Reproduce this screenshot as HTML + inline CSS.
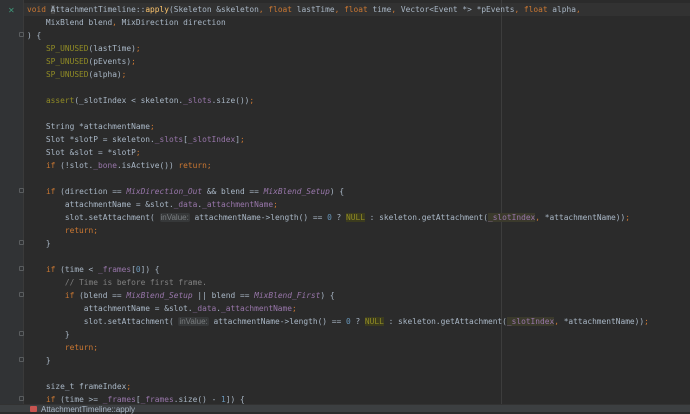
<!DOCTYPE html>
<html><head><meta charset="utf-8"><style>
html,body{margin:0;padding:0}
body{width:690px;height:411px;overflow:hidden;background:#2b2b2b;position:relative;font-family:"DejaVu Sans Mono","Liberation Mono",monospace;font-size:7.86px;color:#a9b7c6}
#gut{position:absolute;left:0;top:0;width:23px;height:404px;background:#313335;border-right:1px solid #3a3a3a}
#guide{position:absolute;left:501px;top:0;width:1px;height:404px;background:#3d3d3d}
#cur{position:absolute;left:24px;top:3px;width:666px;height:13px;background:#323232}
.l{position:absolute;left:27px;white-space:pre;line-height:13px;height:13px}
.k{color:#cc7832}.m{color:#908b25}.f{color:#ffc66d}.p{color:#9876aa}.i{color:#9876aa;font-style:italic}.c{color:#808080}.n{color:#6897bb}
.nl{color:#908b25;background:#3b3b1e}
.hl{background:#3b3a2c}
.h{color:#7a7e80;background:#363839;border-radius:2px;font-family:"Liberation Sans",sans-serif;font-size:8px;padding:0 1px}
.fold{position:absolute;left:19px;width:5px;height:5px;border:1px solid #5a5d5f;border-radius:1px;box-sizing:border-box}
#bar{position:absolute;left:0;top:404px;width:690px;height:7px;background:#3c3f41;border-top:1px solid #323232}
#bar span{position:absolute;left:41px;top:0;font-family:"Liberation Sans",sans-serif;font-size:8px;color:#a9b7c6;line-height:9px}
#bar i{position:absolute;left:30px;top:1px;width:7px;height:6px;background:#c75450;border-radius:1px}
</style></head><body>
<div id="gut"></div>
<div id="cur"></div>
<div id="guide"></div>
<div style="position:absolute;left:8px;top:6px;color:#3f9a7c;font-size:8px;font-family:'DejaVu Sans'">✕</div>
<div class="fold" style="top:32px"></div>
<div class="fold" style="top:188px"></div>
<div class="fold" style="top:240px"></div>
<div class="fold" style="top:266px"></div>
<div class="fold" style="top:292px"></div>
<div class="fold" style="top:331px"></div>
<div class="fold" style="top:357px"></div>
<div class="fold" style="top:396px"></div>

<div class="l" style="top:3px"><span class="k">void </span><span style="background:#4a4a4a">A</span>ttachmentTimeline::<span class="f">apply</span>(Skeleton &amp;skeleton<span class="k">, float </span>lastTime<span class="k">, float </span>time<span class="k">, </span>Vector&lt;Event *&gt; *pEvents<span class="k">, float </span>alpha<span class="k">,</span></div>
<div class="l" style="top:16px">    MixBlend blend<span class="k">, </span>MixDirection direction</div>
<div class="l" style="top:29px">) {</div>
<div class="l" style="top:42px">    <span class="m">SP_UNUSED</span>(lastTime)<span class="k">;</span></div>
<div class="l" style="top:55px">    <span class="m">SP_UNUSED</span>(pEvents)<span class="k">;</span></div>
<div class="l" style="top:68px">    <span class="m">SP_UNUSED</span>(alpha)<span class="k">;</span></div>
<div class="l" style="top:94px">    <span class="m">assert</span>(_slotIndex &lt; skeleton.<span class="p">_slots</span>.size())<span class="k">;</span></div>
<div class="l" style="top:120px">    String *attachmentName<span class="k">;</span></div>
<div class="l" style="top:133px">    Slot *slotP = skeleton.<span class="p">_slots</span>[<span class="p">_slotIndex</span>]<span class="k">;</span></div>
<div class="l" style="top:146px">    Slot &amp;slot = *slotP<span class="k">;</span></div>
<div class="l" style="top:159px">    <span class="k">if </span>(!slot.<span class="p">_bone</span>.isActive()) <span class="k">return;</span></div>
<div class="l" style="top:185px">    <span class="k">if </span>(direction == <span class="i">MixDirection_Out</span> &amp;&amp; blend == <span class="i">MixBlend_Setup</span>) {</div>
<div class="l" style="top:198px">        attachmentName = &amp;slot.<span class="p">_data</span>.<span class="p">_attachmentName</span><span class="k">;</span></div>
<div class="l" style="top:211px">        slot.setAttachment( <span class="h">inValue:</span> attachmentName-&gt;length() == <span class="n">0</span> ? <span class="nl">NULL</span> : skeleton.getAttachment(<span class="p hl">_slotIndex</span><span class="k">, </span>*attachmentName))<span class="k">;</span></div>
<div class="l" style="top:224px">        <span class="k">return;</span></div>
<div class="l" style="top:237px">    }</div>
<div class="l" style="top:263px">    <span class="k">if </span>(time &lt; <span class="p">_frames</span>[<span class="n">0</span>]) {</div>
<div class="l" style="top:276px">        <span class="c">// Time is before first frame.</span></div>
<div class="l" style="top:289px">        <span class="k">if </span>(blend == <span class="i">MixBlend_Setup</span> || blend == <span class="i">MixBlend_First</span>) {</div>
<div class="l" style="top:302px">            attachmentName = &amp;slot.<span class="p">_data</span>.<span class="p">_attachmentName</span><span class="k">;</span></div>
<div class="l" style="top:315px">            slot.setAttachment( <span class="h">inValue:</span> attachmentName-&gt;length() == <span class="n">0</span> ? <span class="nl">NULL</span> : skeleton.getAttachment(<span class="p hl">_slotIndex</span><span class="k">, </span>*attachmentName))<span class="k">;</span></div>
<div class="l" style="top:328px">        }</div>
<div class="l" style="top:341px">        <span class="k">return;</span></div>
<div class="l" style="top:354px">    }</div>
<div class="l" style="top:380px">    size_t frameIndex<span class="k">;</span></div>
<div class="l" style="top:393px">    <span class="k">if </span>(time &gt;= <span class="p">_frames</span>[<span class="p">_frames</span>.size() - <span class="n">1</span>]) {</div>
<div id="bar"><i></i><span>AttachmentTimeline::apply</span></div>
</body></html>
